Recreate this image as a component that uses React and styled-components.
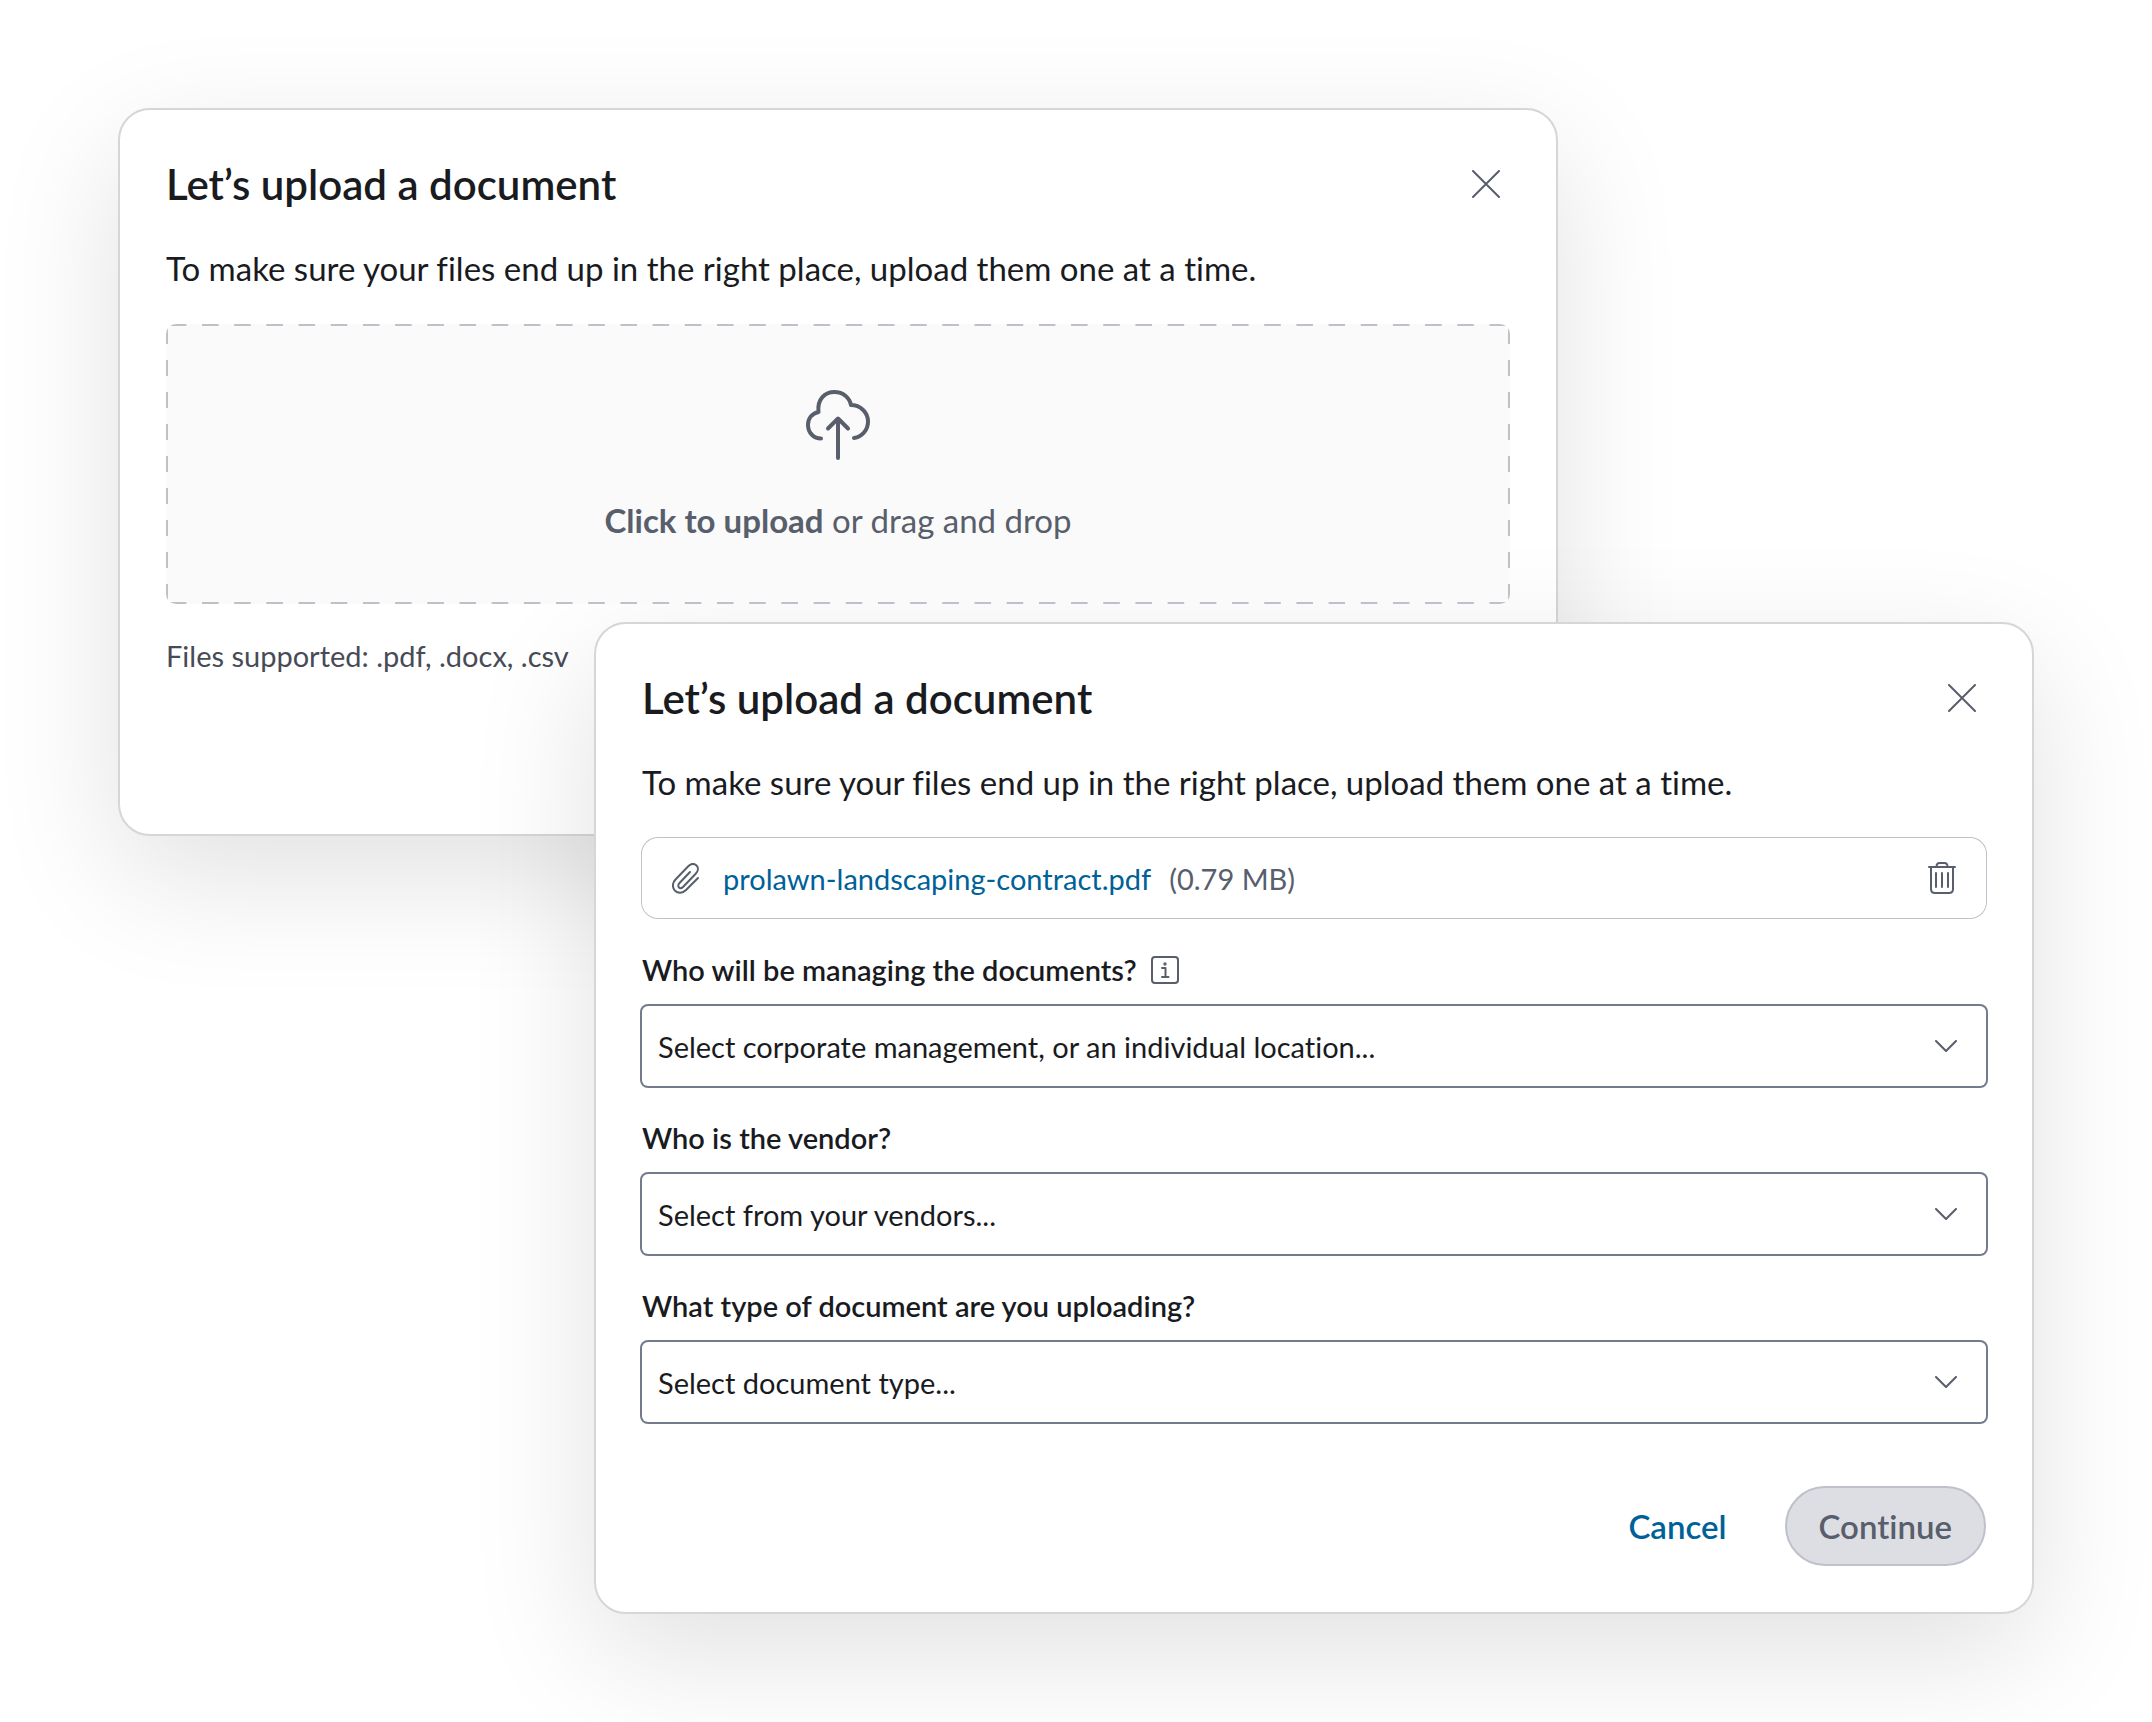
import React from 'react'
import styled, { createGlobalStyle } from 'styled-components'

const GlobalStyle = createGlobalStyle`
  * {
    box-sizing: border-box;
  }
  body {
    margin: 0;
    background: #fff;
    color: #191b1f;
    font-family: Lato, "Liberation Sans", sans-serif;
    font-size: 33px;
    font-variant-ligatures: none;
  }
`

const Stage = styled.main`
  display: grid;
  grid-template-columns: 476px 1fr 476px;
  grid-template-rows: 514px auto;
  padding: 108px 118px;
`

const Card = styled.section`
  padding: 46px;
  background: #fff;
  border: 2px solid #d6d6d6;
  border-radius: 32px;
  box-shadow: 0 40px 128px rgba(0, 0, 0, 0.12);
`

const BackCard = styled(Card)`
  grid-column: 1 / 3;
  grid-row: 1 / 3;
  align-self: start;
  padding-bottom: 158px;
`

const FrontCard = styled(Card)`
  grid-column: 2 / 4;
  grid-row: 2;
`

const Header = styled.header`
  display: flex;
  align-items: center;
  justify-content: space-between;
  height: 56px;
  padding-right: 2px;
`

const Title = styled.h2`
  margin: 0;
  font-size: 42px;
  line-height: 56px;
  font-weight: 600;
`

const IconButton = styled.button`
  display: flex;
  padding: 8px;
  border: 0;
  background: none;
  color: #585e6b;
  cursor: pointer;
`

const Intro = styled.p`
  margin: 36px 0;
  line-height: 40px;
`

const line = (dir) =>
  `linear-gradient(${dir}, transparent 25%, #bfc1ca 25%, #bfc1ca 75%, transparent 75%)`

const DropZone = styled.button`
  position: relative;
  display: flex;
  flex-direction: column;
  align-items: center;
  gap: 40px;
  width: 100%;
  padding: 66px 0 64px;
  overflow: hidden;
  border: 0;
  border-radius: 10px;
  background: #fafafa;
  color: #585e6b;
  font: inherit;
  line-height: 40px;
  cursor: pointer;

  /* long dashes, which border-style: dashed can't do */
  &::before {
    content: '';
    position: absolute;
    inset: -4px;
    background-image: ${line('to right')}, ${line('to right')}, ${line('to bottom')}, ${line('to bottom')};
    background-position: 0 4px, 0 calc(100% - 4px), 4px 0, calc(100% - 4px) 0;
    background-size: 32px 2px, 32px 2px, 2px 32px, 2px 32px;
    background-repeat: round no-repeat, round no-repeat, no-repeat round, no-repeat round;
  }
`

const Hint = styled.p`
  margin: 32px 0 0;
  color: #474b56;
  font-size: 29px;
  line-height: 40px;
`

const FileRow = styled.div`
  display: flex;
  align-items: center;
  height: 80px;
  padding: 0 22px 0 30px;
  border-radius: 16px;
  box-shadow: 0 0 0 1px #bfc1ca;
  color: #585e6b;
  font-size: 29px;
`

const FileLink = styled.a`
  margin: 0 18px 0 24px;
  color: #006199;
  text-decoration: none;
`

const FileSize = styled.span`
  flex: 1;
`

const Field = styled.div`
  margin-top: 32px;
`

const LabelRow = styled.div`
  display: flex;
  align-items: center;
  gap: 6px;
  height: 40px;
  margin-bottom: 16px;
`

const Label = styled.label`
  font-size: 29px;
  line-height: 40px;
  font-weight: 600;
`

const SelectBox = styled.div`
  display: grid;
  align-items: center;
  color: #585e6b;

  & > * {
    grid-area: 1 / 1;
  }
  svg {
    justify-self: end;
    margin-right: 29px;
    pointer-events: none;
  }
`

const Select = styled.select`
  appearance: none;
  width: 100%;
  height: 80px;
  padding: 0 64px 0 16px;
  border: 0;
  border-radius: 6px;
  box-shadow: 0 0 0 2px #737b8c;
  background: #fff;
  color: #191b1f;
  font: inherit;
  font-size: 29px;
  font-variant-ligatures: none;
`

const Footer = styled.footer`
  display: flex;
  justify-content: flex-end;
  gap: 24px;
  margin-top: 64px;
`

const Button = styled.button`
  height: 80px;
  padding: 0 32px;
  border: 2px solid transparent;
  border-radius: 40px;
  background: none;
  color: #006199;
  font: inherit;
  font-weight: 600;
  font-variant-ligatures: none;
  cursor: pointer;

  &:disabled {
    border-color: #bfc1ca;
    background: #dddee3;
    color: #585e6b;
    cursor: default;
  }
`

const Svg = ({ w, h, stroke = 2, children }) => (
  <svg
    width={w}
    height={h}
    viewBox={`0 0 ${w} ${h}`}
    fill="none"
    stroke="currentColor"
    strokeWidth={stroke}
    strokeLinecap="round"
    strokeLinejoin="round"
    aria-hidden="true"
  >
    {children}
  </svg>
)

const CloseIcon = () => (
  <Svg w={28} h={28}>
    <path d="M1 1l26 26M27 1L1 27" />
  </Svg>
)

const CloudIcon = () => (
  <Svg w={64} h={70} stroke={4}>
    <path d="M15 48.5C8 48.5 2 43 2 35C2 28.500 6 23.500 12.500 22C11 9 19 2 28.500 2C37 2 43.500 7.500 45 15C54 15 62 22 62 31.500C62 40 56 47 48 48" />
    <path d="M32 68V29M22 38.500L32 28.500L42 38.500" />
  </Svg>
)

const ClipIcon = () => (
  <Svg w={27} h={31}>
    <path d="M18 9L7.500 20C6 21.500 6 23.500 7 24.500C8 25.500 9.700 25.500 11 24L23.500 11C26.500 8 26.500 4.500 24.500 2.500C22.300 0.400 19 0.500 16 3.500L3.500 16.500C0 20 0.300 25 3 27.700C6 30.500 10.500 30.500 14 27L26 15" />
  </Svg>
)

const TrashIcon = () => (
  <Svg w={28} h={32}>
    <path d="M1 5H27M3 5V27C3 29.500 4.500 31 7 31H21C23.500 31 25 29.500 25 27V5M8.500 5C8.500 2.500 9.500 1 11.500 1H16.500C18.500 1 19.500 2.500 19.500 5M8 11V25M14 11V25M20 11V25" />
  </Svg>
)

const InfoIcon = () => (
  <Svg w={28} h={28}>
    <rect x="1" y="1" width="26" height="26" rx="3" />
    <path d="M11 12H14.500V21M11 21H17.500" />
    <circle cx="14" cy="8" r="0.700" />
  </Svg>
)

const ChevronIcon = () => (
  <Svg w={22} h={12}>
    <path d="M1 1l10 10L21 1" />
  </Svg>
)

const DialogTop = () => (
  <>
    <Header>
      <Title>Let’s upload a document</Title>
      <IconButton type="button" aria-label="Close">
        <CloseIcon />
      </IconButton>
    </Header>
    <Intro>
      To make sure your files end up in the right place, upload them one at a time.
    </Intro>
  </>
)

const SelectField = ({ id, label, placeholder, info }) => (
  <Field>
    <LabelRow>
      <Label htmlFor={id}>{label}</Label>
      {info && (
        <IconButton type="button" aria-label="More information">
          <InfoIcon />
        </IconButton>
      )}
    </LabelRow>
    <SelectBox>
      <Select id={id} defaultValue="">
        <option value="">{placeholder}</option>
      </Select>
      <ChevronIcon />
    </SelectBox>
  </Field>
)

export default function App() {
  return (
    <>
      <GlobalStyle />
      <Stage>
        <BackCard>
          <DialogTop />
          <DropZone type="button">
            <CloudIcon />
            <span>
              <strong>Click to upload</strong> or drag and drop
            </span>
          </DropZone>
          <Hint>Files supported: .pdf, .docx, .csv</Hint>
        </BackCard>
        <FrontCard>
          <DialogTop />
          <FileRow>
            <ClipIcon />
            <FileLink href="#file">prolawn-landscaping-contract.pdf</FileLink>
            <FileSize>(0.79 MB)</FileSize>
            <IconButton type="button" aria-label="Remove file">
              <TrashIcon />
            </IconButton>
          </FileRow>
          <SelectField
            id="manager"
            label="Who will be managing the documents?"
            placeholder="Select corporate management, or an individual location..."
            info
          />
          <SelectField
            id="vendor"
            label="Who is the vendor?"
            placeholder="Select from your vendors..."
          />
          <SelectField
            id="type"
            label="What type of document are you uploading?"
            placeholder="Select document type..."
          />
          <Footer>
            <Button type="button">Cancel</Button>
            <Button type="button" disabled>
              Continue
            </Button>
          </Footer>
        </FrontCard>
      </Stage>
    </>
  )
}
